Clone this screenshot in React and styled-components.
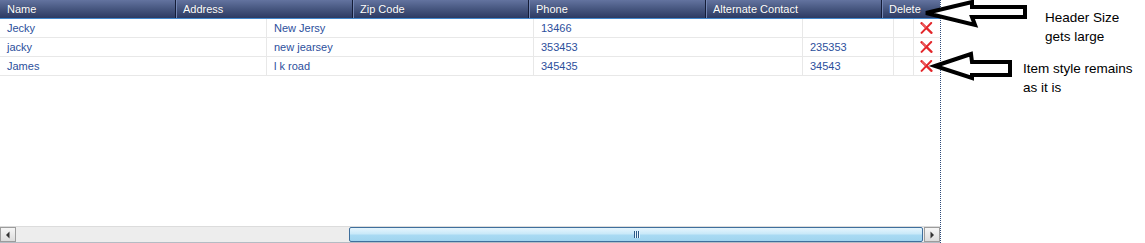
import React from "react";
import styled, { createGlobalStyle } from "styled-components";

const Global = createGlobalStyle`
  html, body { margin: 0; padding: 0; background: #fff; }
  body { font-family: "Liberation Sans", Arial, sans-serif; }
`;

const Page = styled.div`
  position: relative;
  width: 1145px;
  height: 243px;
  display: flex;
  background: #fff;
  overflow: hidden;
`;

const Grid = styled.div`
  width: 940px;
  height: 243px;
  display: flex;
  flex-direction: column;
  border-right: 1px dotted #2d4a78;
  box-sizing: content-box;
`;

const HeaderRow = styled.div`
  display: flex;
  height: 18px;
  border-bottom: 1px solid #4287cc;
  background: linear-gradient(#63739f, #46567f 50%, #2c3a63);
`;

const HeaderCell = styled.div`
  width: ${(p) => p.$w}px;
  flex: ${(p) => (p.$grow ? 1 : "none")};
  box-sizing: border-box;
  padding-left: ${(p) => (p.$first ? 7 : 6)}px;
  border-left: ${(p) => (p.$first ? "none" : "1px solid #7487b5")};
  border-right: ${(p) => (p.$grow ? "none" : "1px solid #141c36")};
  color: #fff;
  font-size: 11px;
  line-height: 18px;
  white-space: nowrap;
  text-shadow: 0 0 1px rgba(0, 0, 0, 0.3);
`;

const Row = styled.div`
  display: flex;
  height: 18px;
  border-bottom: 1px solid #e8e8e8;
`;

const Cell = styled.div`
  width: ${(p) => p.$w}px;
  flex: ${(p) => (p.$grow ? 1 : "none")};
  box-sizing: border-box;
  padding-left: 7px;
  border-right: ${(p) => (p.$grow ? "none" : "1px solid #e8e8e8")};
  color: #2c4f9c;
  font-size: 11px;
  line-height: 18px;
  white-space: nowrap;
  display: flex;
  align-items: center;
`;

const IconCell = styled(Cell)`
  padding-left: 6px;
`;

const Filler = styled.div`
  flex: 1;
`;

const ScrollBar = styled.div`
  height: 17px;
  display: flex;
  align-items: stretch;
  background: #ededed;
  border-top: 1px solid #dcdcdc;
  border-bottom: 1px solid #b4bcc4;
  box-sizing: border-box;
  margin-bottom: 0;
`;

const ArrowBtn = styled.div`
  width: 16px;
  box-sizing: border-box;
  border: 1px solid #9c9c9c;
  background: linear-gradient(#f6f6f6, #dcdcdc);
  display: flex;
  align-items: center;
  justify-content: center;
  flex: none;
`;

const Track = styled.div`
  flex: 1;
  display: flex;
  padding-left: ${(p) => p.$before}px;
`;

const Thumb = styled.div`
  flex: 1;
  box-sizing: border-box;
  border: 1px solid #3f6f9c;
  border-radius: 2px;
  background: linear-gradient(#e6f5fd, #c9e9f9 45%, #a9daf3 55%, #9fd4ef);
  display: flex;
  align-items: center;
  justify-content: center;
  margin-right: 1px;
`;

const Grip = styled.div`
  display: flex;
  gap: 1px;
  margin-left: 0px;
  & > span {
    width: 1px;
    height: 7px;
    background: #2c5a86;
    box-shadow: 1px 0 0 #e8f6ff;
  }
`;

const Notes = styled.svg`
  position: absolute;
  left: 0;
  top: 0;
  pointer-events: none;
`;

const Note = styled.div`
  position: absolute;
  left: ${(p) => p.$x}px;
  top: ${(p) => p.$y}px;
  font-family: "Liberation Sans", Arial, sans-serif;
  font-size: 13.5px;
  line-height: 19px;
  color: #000;
  white-space: nowrap;
`;

const headers = [
  { t: "Name", w: 176, first: true },
  { t: "Address", w: 177 },
  { t: "Zip Code", w: 176 },
  { t: "Phone", w: 177 },
  { t: "Alternate Contact", w: 176 },
  { t: "Delete", grow: true },
];

const rows = [
  ["Jecky", "New Jersy", "13466", ""],
  ["jacky", "new jearsey", "353453", "235353"],
  ["James", "l k road", "345435", "34543"],
];

const widths = [267, 267, 269, 91, 20];

const DeleteIcon = () => (
  <svg width="13" height="12" viewBox="0 0 13 12">
    <path d="M1.5 1.2 L11.5 10.8" stroke="#e3262a" strokeWidth="2.3" strokeLinecap="round" />
    <path d="M11.2 1 L1.6 10.9" stroke="#e3262a" strokeWidth="2" strokeLinecap="round" />
    <path d="M2 1.6 L6 5.4" stroke="#f7a0a0" strokeWidth="0.8" />
  </svg>
);

export default function App() {
  return (
    <>
      <Global />
      <Page>
        <Grid>
          <HeaderRow>
            {headers.map((h) => (
              <HeaderCell key={h.t} $w={h.w} $first={h.first} $grow={h.grow}>
                {h.t}
              </HeaderCell>
            ))}
          </HeaderRow>
          {rows.map((r, i) => (
            <Row key={i}>
              {r.map((v, j) => (
                <Cell key={j} $w={widths[j]}>
                  {v}
                </Cell>
              ))}
              <Cell $w={widths[4]} />
              <IconCell $grow>
                <DeleteIcon />
              </IconCell>
            </Row>
          ))}
          <Filler />
          <ScrollBar>
            <ArrowBtn>
              <svg width="6" height="8" viewBox="0 0 6 8">
                <path d="M4.5 0.5 L1 4 L4.5 7.5 Z" fill="#333" />
              </svg>
            </ArrowBtn>
            <Track $before={333}>
              <Thumb>
                <Grip>
                  <span />
                  <span />
                  <span />
                </Grip>
              </Thumb>
            </Track>
            <ArrowBtn>
              <svg width="6" height="8" viewBox="0 0 6 8">
                <path d="M1.5 0.5 L5 4 L1.5 7.5 Z" fill="#333" />
              </svg>
            </ArrowBtn>
          </ScrollBar>
        </Grid>
        <Notes width="1145" height="243" viewBox="0 0 1145 243">
          <polygon
            points="926,13 972,2 972,7 1025,7 1025,17 972,17 975,25"
            fill="#fff"
            stroke="#000"
            strokeWidth="4"
            strokeLinejoin="miter"
          />
          <polygon
            points="935,66 971,54 972,62 1010,62 1010,75 972,75 972,78"
            fill="#fff"
            stroke="#000"
            strokeWidth="4"
            strokeLinejoin="miter"
          />
        </Notes>
        <Note $x={1045} $y={8}>
          Header Size
          <br />
          gets large
        </Note>
        <Note $x={1023} $y={59}>
          Item style remains
          <br />
          as it is
        </Note>
      </Page>
    </>
  );
}
